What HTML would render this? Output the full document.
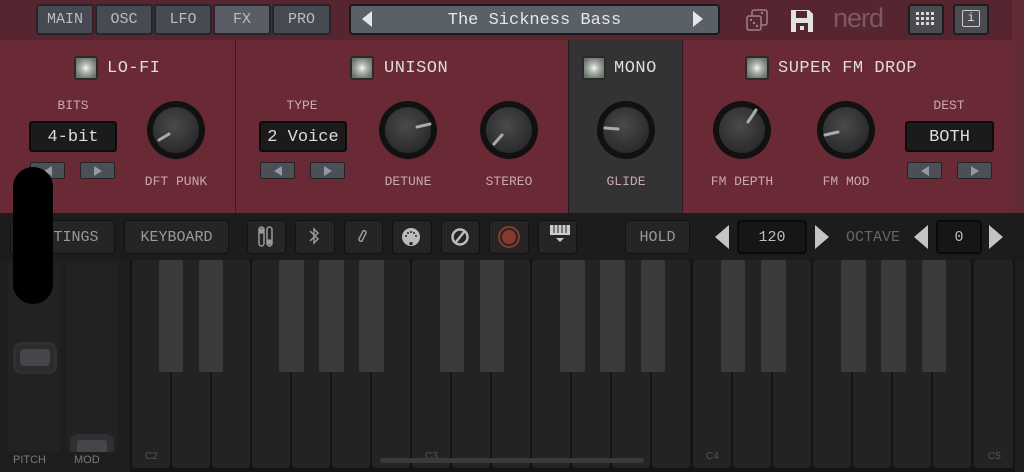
<!DOCTYPE html>
<html><head><meta charset="utf-8"><style>
*{margin:0;padding:0;box-sizing:border-box}
body{width:1024px;height:472px;overflow:hidden;background:#1e1e1e;position:relative;font-family:"Liberation Mono",monospace}
.a{position:absolute}
.tab{position:absolute;top:4px;height:31px;background:#474a52;border:2px solid #26262a;border-radius:3px;color:#b8bcc4;font-size:15px;text-align:center;line-height:28px}
.lbl{position:absolute;color:#c9a9ae;font-size:13px;text-align:center}
.ttl{position:absolute;color:#ddd;font-size:17px;letter-spacing:0.5px}
.led{position:absolute;width:24px;height:24px;border:2px solid #2a2a2a;border-radius:3px;background:radial-gradient(circle,#f2f5f2 0,#aab0aa 35%,#6e756f 80%)}
.disp{position:absolute;background:#1b1b1c;border:2px solid #0c0c0c;border-radius:3px;color:#ddd;font-size:17px;text-align:center;line-height:29px}
.arr{position:absolute;width:35px;height:17px;background:#4c4f56;border:1px solid #232326;border-radius:2px}
.arr.l::after,.arr.r::after{content:"";position:absolute;top:3px;left:13px;border-top:5px solid transparent;border-bottom:5px solid transparent}
.arr.l::after{border-right:8px solid #8e9aa8}
.arr.r::after{border-left:8px solid #8e9aa8}
.tb{position:absolute;top:220px;height:34px;background:#252525;border:1px solid #111;border-radius:4px;color:#9a9a9a;font-size:15px;text-align:center;line-height:33px}
</style></head><body>
<div class="a" style="left:0;top:0;width:1024px;height:40px;background:#572530"></div>
<div class="a" style="left:0;top:40px;width:1024px;height:173px;background:#692a35"></div>
<div class="a" style="left:1012px;top:0;width:12px;height:213px;background:#622b35"></div>
<div class="a" style="left:235px;top:40px;width:1px;height:173px;background:#3a1a1f"></div>
<div class="a" style="left:568px;top:40px;width:115px;height:173px;background:#333335;border-left:1px solid #2a1a1c;border-right:1px solid #2a1a1c"></div>

<div class="tab" style="left:36px;width:58px">MAIN</div>
<div class="tab" style="left:95px;width:58px">OSC</div>
<div class="tab" style="left:154px;width:58px">LFO</div>
<div class="tab" style="left:213px;width:58px;background:#5a5d65">FX</div>
<div class="tab" style="left:272px;width:59px">PRO</div>
<div class="a" style="left:349px;top:4px;width:371px;height:31px;background:#5a6068;border:2px solid #1a1a1c;border-radius:4px;color:#e6e6e6;font-size:17px;text-align:center;line-height:29px">The Sickness Bass</div>
<div class="a" style="left:362px;top:11px;width:0;height:0;border-top:8px solid transparent;border-bottom:8px solid transparent;border-right:10px solid #e6e6e6"></div>
<div class="a" style="left:693px;top:11px;width:0;height:0;border-top:8px solid transparent;border-bottom:8px solid transparent;border-left:10px solid #e6e6e6"></div>
<svg class="a" style="left:745px;top:8px" width="26" height="24"><rect x="7" y="2" width="15" height="15" rx="2" fill="none" stroke="#a08086" stroke-width="1.5"/><rect x="2" y="8" width="14" height="14" rx="2" fill="#572530" stroke="#a08086" stroke-width="1.5"/><circle cx="6" cy="12" r="1.2" fill="#a08086"/><circle cx="9" cy="15" r="1.2" fill="#a08086"/><circle cx="12" cy="18" r="1.2" fill="#a08086"/><circle cx="17" cy="5" r="1.2" fill="#a08086"/></svg>
<svg class="a" style="left:790px;top:9px" width="24" height="24"><path d="M1 1h18l4 4v18H1z" fill="#e2e2e2"/><rect x="6" y="2" width="11" height="7" fill="#572530"/><rect x="6" y="14" width="12" height="9" fill="#572530"/><rect x="10" y="17" width="4" height="4" fill="#e2e2e2"/></svg>
<div class="a" style="left:833px;top:3px;color:#7c5a60;font-family:'Liberation Sans',sans-serif;font-size:27px;letter-spacing:-1px">nerd</div>
<div class="a" style="left:908px;top:4px;width:36px;height:31px;background:#4a4c52;border:2px solid #1e1e20;border-radius:3px"></div>
<svg class="a" style="left:915px;top:11px" width="22" height="16"><g fill="#d8d8d8"><rect x="1" y="1" width="3" height="3"/><rect x="6" y="1" width="3" height="3"/><rect x="11" y="1" width="3" height="3"/><rect x="16" y="1" width="3" height="3"/><rect x="1" y="6" width="3" height="3"/><rect x="6" y="6" width="3" height="3"/><rect x="11" y="6" width="3" height="3"/><rect x="16" y="6" width="3" height="3"/><rect x="1" y="11" width="3" height="3"/><rect x="6" y="11" width="3" height="3"/><rect x="11" y="11" width="3" height="3"/><rect x="16" y="11" width="3" height="3"/></g></svg>
<div class="a" style="left:953px;top:4px;width:36px;height:31px;background:#4a4c52;border:2px solid #1e1e20;border-radius:3px"></div>
<div class="a" style="left:962px;top:10px;width:18px;height:17px;border:1.5px solid #ccc;border-radius:2px;color:#ddd;font-size:12px;text-align:center;line-height:14px">i</div>

<div class="led" style="left:74px;top:56px"></div><div class="ttl" style="left:107px;top:59px">LO-FI</div>
<div class="led" style="left:350px;top:56px"></div><div class="ttl" style="left:384px;top:59px">UNISON</div>
<div class="led" style="left:582px;top:56px"></div><div class="ttl" style="left:614px;top:59px">MONO</div>
<div class="led" style="left:745px;top:56px"></div><div class="ttl" style="left:778px;top:59px">SUPER FM DROP</div>

<div class="lbl" style="left:30px;top:98px;width:86px">BITS</div>
<div class="disp" style="left:29px;top:121px;width:88px;height:31px">4-bit</div>
<div class="arr l" style="left:30px;top:162px"></div><div class="arr r" style="left:80px;top:162px"></div>
<div class="lbl" style="left:126px;top:174px;width:100px">DFT PUNK</div>
<div class="lbl" style="left:258px;top:98px;width:88px">TYPE</div>
<div class="disp" style="left:259px;top:121px;width:88px;height:31px">2 Voice</div>
<div class="arr l" style="left:260px;top:162px"></div><div class="arr r" style="left:310px;top:162px"></div>
<div class="lbl" style="left:358px;top:174px;width:100px">DETUNE</div>
<div class="lbl" style="left:459px;top:174px;width:100px">STEREO</div>
<div class="lbl" style="left:576px;top:174px;width:100px">GLIDE</div>
<div class="lbl" style="left:692px;top:174px;width:100px">FM DEPTH</div>
<div class="lbl" style="left:796px;top:174px;width:100px">FM MOD</div>
<div class="lbl" style="left:905px;top:98px;width:88px">DEST</div>
<div class="disp" style="left:905px;top:121px;width:89px;height:31px">BOTH</div>
<div class="arr l" style="left:907px;top:162px"></div><div class="arr r" style="left:957px;top:162px"></div>

<svg class="a" style="left:0;top:0" width="1024" height="213">
<defs><radialGradient id="k" cx="0.45" cy="0.4" r="0.6"><stop offset="0" stop-color="#4a4a4c"/><stop offset="1" stop-color="#2a2a2b"/></radialGradient></defs>
<g stroke="#aaa" stroke-width="3" stroke-linecap="round">
<g transform="translate(176,130)"><circle r="29" fill="#111" stroke="none"/><circle r="23" fill="url(#k)" stroke="none"/><line x1="-7" y1="4" x2="-17" y2="10"/></g>
<g transform="translate(408,130)"><circle r="29" fill="#111" stroke="none"/><circle r="23" fill="url(#k)" stroke="none"/><line x1="9" y1="-3" x2="22" y2="-6"/></g>
<g transform="translate(509,130)"><circle r="29" fill="#111" stroke="none"/><circle r="23" fill="url(#k)" stroke="none"/><line x1="-7" y1="5" x2="-15" y2="14"/></g>
<g transform="translate(626,130)"><circle r="29" fill="#111" stroke="none"/><circle r="23" fill="url(#k)" stroke="none"/><line x1="-8" y1="-1" x2="-21" y2="-2"/></g>
<g transform="translate(742,130)"><circle r="29" fill="#111" stroke="none"/><circle r="23" fill="url(#k)" stroke="none"/><line x1="6" y1="-8" x2="14" y2="-20"/></g>
<g transform="translate(846,130)"><circle r="29" fill="#111" stroke="none"/><circle r="23" fill="url(#k)" stroke="none"/><line x1="-8" y1="2" x2="-21" y2="5"/></g>
</g></svg>

<div class="a" style="left:0;top:213px;width:1024px;height:47px;background:#1c1c1c"></div>
<div class="tb" style="left:10px;width:105px">SETTINGS</div>
<div class="tb" style="left:124px;width:105px">KEYBOARD</div>
<div class="tb" style="left:247px;width:39px"></div><div class="tb" style="left:295px;width:40px"></div><div class="tb" style="left:344px;width:39px"></div><div class="tb" style="left:392px;width:40px"></div><div class="tb" style="left:441px;width:39px"></div><div class="tb" style="left:489px;width:40px"></div><div class="tb" style="left:538px;width:39px"></div>
<svg class="a" style="left:247px;top:220px" width="340" height="34" fill="none" stroke="#999" stroke-width="1.5">
<rect x="12" y="7" width="5" height="19" rx="2.5"/><rect x="20" y="7" width="5" height="19" rx="2.5"/><circle cx="14.5" cy="11" r="2" fill="#999"/><circle cx="22.5" cy="22" r="2" fill="#999"/>
<path d="M63 11l8 8-4 4V9l4 4-8 8"/>
<path d="M116 11l-4 8a2 2 0 003 2l4-8a2 2 0 00-3-2z"/>
<circle cx="164" cy="17" r="9" fill="#bbb" stroke="none"/><g fill="#252525" stroke="none"><circle cx="159" cy="16" r="1"/><circle cx="161" cy="13" r="1"/><circle cx="164" cy="12" r="1"/><circle cx="167" cy="13" r="1"/><circle cx="169" cy="16" r="1"/><rect x="162.5" y="22" width="3" height="3"/></g>
<circle cx="213" cy="17" r="7.5" stroke="#bbb" stroke-width="2.5"/><line x1="209" y1="22" x2="217" y2="12" stroke="#bbb" stroke-width="2.5"/>
<circle cx="262" cy="17" r="10" stroke="#8a3a2c" stroke-width="2"/><circle cx="262" cy="17" r="7" fill="#8a3a2c" stroke="none"/>
<rect x="303" y="5" width="20" height="10" fill="#ccc" stroke="none"/><g stroke="#252525" stroke-width="1"><line x1="307" y1="5" x2="307" y2="13"/><line x1="311" y1="5" x2="311" y2="13"/><line x1="315" y1="5" x2="315" y2="13"/><line x1="319" y1="5" x2="319" y2="13"/></g><path d="M309 18h8l-4 4z" fill="#ccc" stroke="none"/>
</svg>
<div class="tb" style="left:625px;width:65px">HOLD</div>
<div class="a" style="left:715px;top:225px;width:0;height:0;border-top:12px solid transparent;border-bottom:12px solid transparent;border-right:14px solid #c4c4c4"></div>
<div class="a" style="left:737px;top:220px;width:70px;height:34px;background:#161616;border:2px solid #0a0a0a;border-radius:4px;color:#bbb;font-size:15px;text-align:center;line-height:31px">120</div>
<div class="a" style="left:815px;top:225px;width:0;height:0;border-top:12px solid transparent;border-bottom:12px solid transparent;border-left:14px solid #c4c4c4"></div>
<div class="a" style="left:846px;top:229px;color:#666;font-size:15px">OCTAVE</div>
<div class="a" style="left:914px;top:225px;width:0;height:0;border-top:12px solid transparent;border-bottom:12px solid transparent;border-right:14px solid #c4c4c4"></div>
<div class="a" style="left:936px;top:220px;width:46px;height:34px;background:#161616;border:2px solid #0a0a0a;border-radius:4px;color:#bbb;font-size:15px;text-align:center;line-height:31px">0</div>
<div class="a" style="left:989px;top:225px;width:0;height:0;border-top:12px solid transparent;border-bottom:12px solid transparent;border-left:14px solid #c4c4c4"></div>

<div class="a" style="left:8px;top:263px;width:52px;height:188px;background:#222"></div>
<div class="a" style="left:67px;top:263px;width:50px;height:188px;background:#222"></div>
<div class="a" style="left:13px;top:342px;width:44px;height:32px;border-radius:8px;background:#2c2c2e;border:3px solid #2f3032"></div>
<div class="a" style="left:20px;top:349px;width:30px;height:17px;border-radius:4px;background:#45464a"></div>
<div class="a" style="left:70px;top:434px;width:44px;height:18px;border-radius:8px 8px 0 0;background:#2f3032"></div>
<div class="a" style="left:77px;top:440px;width:30px;height:12px;border-radius:3px 3px 0 0;background:#45464a"></div>
<div class="a" style="left:13px;top:454px;color:#7a7a7a;font-family:'Liberation Sans',sans-serif;font-size:11px">PITCH</div>
<div class="a" style="left:74px;top:454px;color:#7a7a7a;font-family:'Liberation Sans',sans-serif;font-size:11px">MOD</div>
<div class="a" style="left:13px;top:167px;width:40px;height:137px;background:#000;border-radius:20px"></div>

<svg class="a" style="left:0;top:260px" width="1024" height="212">
<rect x="130" y="0" width="885" height="212" fill="#141414"/>
<g fill="#232323">
<rect x="132" y="0" width="38" height="208" rx="3"/><rect x="172" y="0" width="38" height="208" rx="3"/><rect x="212" y="0" width="38" height="208" rx="3"/><rect x="252" y="0" width="38" height="208" rx="3"/><rect x="292" y="0" width="38" height="208" rx="3"/><rect x="332" y="0" width="38" height="208" rx="3"/><rect x="372" y="0" width="38" height="208" rx="3"/>
<rect x="412" y="0" width="38" height="208" rx="3"/><rect x="452" y="0" width="38" height="208" rx="3"/><rect x="492" y="0" width="38" height="208" rx="3"/><rect x="532" y="0" width="38" height="208" rx="3"/><rect x="572" y="0" width="38" height="208" rx="3"/><rect x="612" y="0" width="38" height="208" rx="3"/><rect x="652" y="0" width="38" height="208" rx="3"/>
<rect x="693" y="0" width="38" height="208" rx="3"/><rect x="733" y="0" width="38" height="208" rx="3"/><rect x="773" y="0" width="38" height="208" rx="3"/><rect x="813" y="0" width="38" height="208" rx="3"/><rect x="853" y="0" width="38" height="208" rx="3"/><rect x="893" y="0" width="38" height="208" rx="3"/><rect x="933" y="0" width="38" height="208" rx="3"/>
<rect x="974" y="0" width="39" height="208" rx="3"/>
</g>
<g fill="#3b3b3d">
<rect x="159" y="0" width="24" height="112" rx="2"/><rect x="199" y="0" width="24" height="112" rx="2"/>
<rect x="279" y="0" width="25" height="112" rx="2"/><rect x="319" y="0" width="25" height="112" rx="2"/><rect x="359" y="0" width="25" height="112" rx="2"/>
<rect x="440" y="0" width="24" height="112" rx="2"/><rect x="480" y="0" width="24" height="112" rx="2"/>
<rect x="560" y="0" width="25" height="112" rx="2"/><rect x="600" y="0" width="25" height="112" rx="2"/><rect x="641" y="0" width="24" height="112" rx="2"/>
<rect x="721" y="0" width="24" height="112" rx="2"/><rect x="761" y="0" width="25" height="112" rx="2"/>
<rect x="841" y="0" width="25" height="112" rx="2"/><rect x="881" y="0" width="25" height="112" rx="2"/><rect x="922" y="0" width="24" height="112" rx="2"/>
</g>
<g fill="#555" font-family="Liberation Sans,sans-serif" font-size="10"><text x="145" y="199">C2</text><text x="425" y="199">C3</text><text x="706" y="199">C4</text><text x="988" y="199">C5</text></g>
<rect x="380" y="198" width="264" height="5" rx="2.5" fill="#3a3a3a"/>
</svg>
</body></html>
